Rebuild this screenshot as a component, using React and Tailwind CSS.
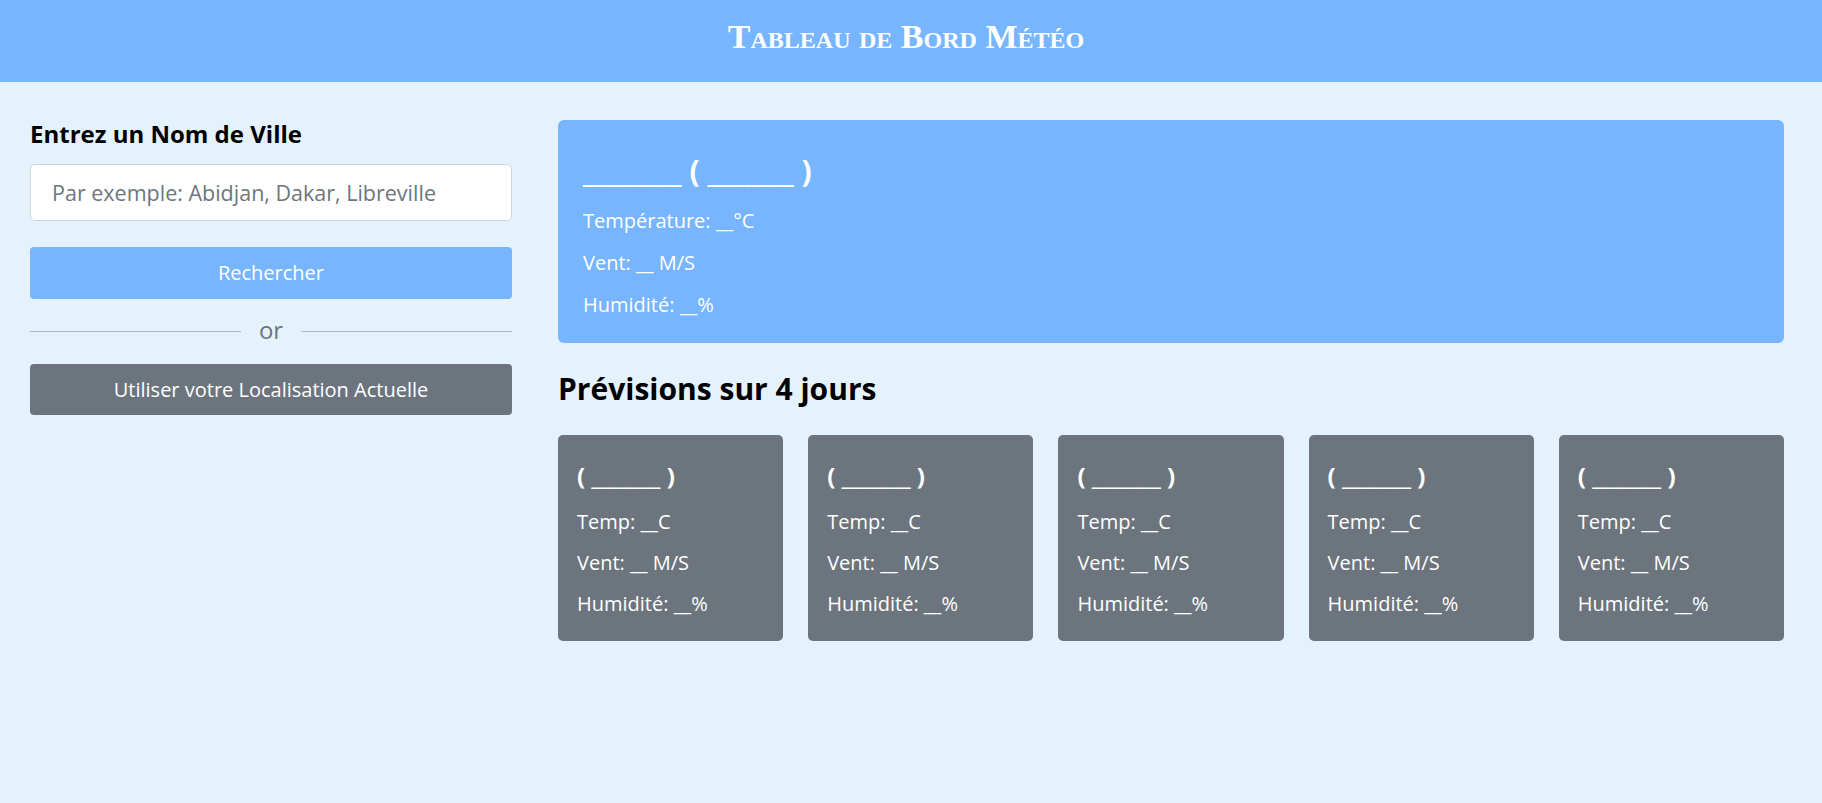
const FORECASTS = [1, 2, 3, 4, 5]

function Divider() {
  return (
    <div className="flex h-[65px] items-center">
      <div className="h-px flex-1 bg-[#adb5bd]" />
      <span className="-mt-[3px] px-[18px] text-[24px] leading-[30px] text-[#6c757d]">or</span>
      <div className="h-px flex-1 bg-[#adb5bd]" />
    </div>
  )
}

function ForecastCard() {
  return (
    <div className="flex h-[206px] flex-col rounded-[5px] bg-[#6c757d] px-[19px] pt-[26px] text-white">
      <h4 className="text-[24px] font-bold leading-[30px]">( _______ )</h4>
      <div className="mt-[10px] text-[20px] font-medium leading-[41px]">
        <p>Temp: __C</p>
        <p>Vent: __ M/S</p>
        <p>Humidité: __%</p>
      </div>
    </div>
  )
}

export default function App() {
  return (
    <div className="min-h-[803px] bg-[#e3f2fd] font-['Open_Sans',sans-serif]">
      <header className="flex h-[82px] items-center justify-center bg-[#77b5fe] pb-[9px]">
        <h1 className="-ml-[10px] font-['Liberation_Serif',serif] text-[34px] font-bold text-white [font-variant:small-caps]">
          Tableau de Bord Météo
        </h1>
      </header>

      <div className="flex gap-[46px] pl-[30px] pr-[38px] pt-[36px]">
        <div className="w-[482px] shrink-0">
          <h3 className="mb-[14px] text-[24px] font-bold leading-[32px] text-black">Entrez un Nom de Ville</h3>
          <input
            type="text"
            placeholder="Par exemple: Abidjan, Dakar, Libreville"
            className="h-[57px] w-full rounded-[5px] border border-[#ced4da] bg-white px-[21px] text-[21.5px] text-[#212529] outline-none placeholder:text-[#6c757d]"
          />
          <button className="mt-[26px] h-[52px] w-full rounded-[4px] bg-[#77b5fe] text-[20px] text-white">
            Rechercher
          </button>
          <Divider />
          <button className="h-[51px] w-full rounded-[4px] bg-[#6c757d] text-[20px] text-white">
            Utiliser votre Localisation Actuelle
          </button>
        </div>

        <div className="min-w-0 flex-1 pt-[2px]">
          <div className="h-[223px] rounded-[6px] bg-[#77b5fe] px-[25px] pt-[32px] text-white">
            <h2 className="text-[30px] font-bold leading-[38px]">________ ( _______ )</h2>
            <div className="mt-[10px] text-[20px] font-medium leading-[42px]">
              <p>Température: __°C</p>
              <p>Vent: __ M/S</p>
              <p>Humidité: __%</p>
            </div>
          </div>

          <h2 className="mt-[26px] text-[30px] font-bold leading-[40px] text-black">Prévisions sur 4 jours</h2>

          <div className="mt-[26px] grid grid-cols-5 gap-[25px]">
            {FORECASTS.map(i => (
              <ForecastCard key={i} />
            ))}
          </div>
        </div>
      </div>
    </div>
  )
}
